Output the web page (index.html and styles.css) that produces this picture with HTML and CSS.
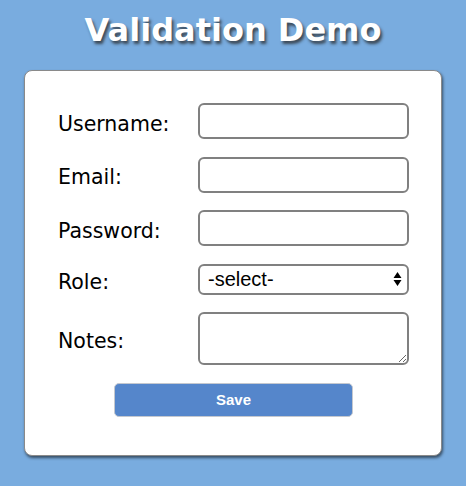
FILE: index.html
```html
<!DOCTYPE html>
<html>
<head>
<meta charset="utf-8">
<link rel="stylesheet" href="styles.css">
</head>
<body>
<h1 class="title">Validation Demo</h1>
<form class="card">
  <label class="label" for="u">Username:</label>
  <input class="field" id="u" type="text">
  <label class="label" for="e">Email:</label>
  <input class="field" id="e" type="text">
  <label class="label" for="p">Password:</label>
  <input class="field" id="p" type="password">
  <label class="label" for="r">Role:</label>
  <div class="select-wrap">
    <select class="field select" id="r"><option>-select-</option></select>
    <svg class="arrows" width="9" height="16" viewBox="0 0 9 16"><path d="M4.5 1 L8.5 7 L0.5 7 Z M0.5 9 L8.5 9 L4.5 15 Z" fill="#000"/></svg>
  </div>
  <label class="label" for="n">Notes:</label>
  <textarea class="field area" id="n"></textarea>
  <button class="save" type="button">Save</button>
</form>
</body>
</html>
```
FILE: styles.css
```css
html, body {
  margin: 0;
  padding: 0;
}
body {
  background: #79acdf;
  min-height: 486px;
  font-family: "DejaVu Sans", Verdana, sans-serif;
}
.title {
  margin: 12px 0 21px;
  text-align: center;
  font-size: 32px;
  font-weight: bold;
  color: #fff;
  line-height: 37px;
  text-shadow: 2px 3px 3px rgba(40, 40, 40, 0.75);
}
.card {
  box-sizing: border-box;
  width: 418px;
  margin-left: 24px;
  background: #fff;
  border: 1px solid #8a8a8a;
  border-radius: 8px;
  box-shadow: 1px 2px 3px rgba(0, 0, 0, 0.55);
  padding: 32px 32px 38px 33px;
  display: grid;
  grid-template-columns: 140px 211px;
  row-gap: 17.5px;
}
.label {
  align-self: center;
  font-size: 20.5px;
  color: #000;
  padding-top: 5px;
}
.field {
  box-sizing: border-box;
  width: 211px;
  height: 36px;
  border: 2px solid #808080;
  border-radius: 6px;
  background: #fff;
  margin: 0;
  outline: none;
}
.select-wrap {
  position: relative;
}
.select {
  display: block;
  height: 31px;
  appearance: none;
  -webkit-appearance: none;
  font-family: "Liberation Sans", Arial, sans-serif;
  font-size: 20px;
  color: #000;
  padding: 0 0 0 8px;
}
.arrows {
  position: absolute;
  right: 7px;
  top: 7px;
  pointer-events: none;
}
.area {
  display: block;
  height: 53px;
  resize: both;
}
.save {
  grid-column: 1 / 3;
  justify-self: center;
  width: 239px;
  height: 34px;
  background: #5586cb;
  border: 1px solid #c4c8cf;
  border-radius: 5px;
  color: #fff;
  font-family: "Liberation Sans", Arial, sans-serif;
  font-weight: bold;
  font-size: 15px;
  padding: 0;
}
```
